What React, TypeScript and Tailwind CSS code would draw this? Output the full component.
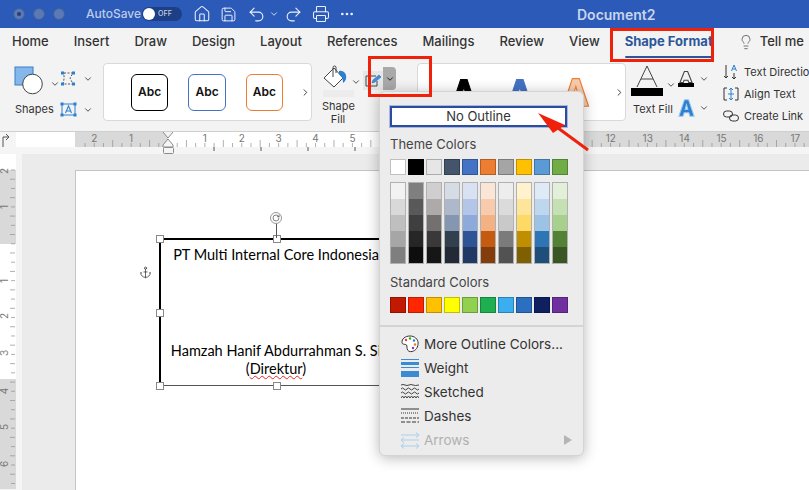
import { ChevronDown, ChevronRight, Home, Lightbulb, MoreHorizontal, Printer, Redo2, RotateCw, Save, Undo2, Anchor } from "lucide-react";

const ui = "font-['Inter','Liberation_Sans',sans-serif]";

const tabs = ["Home", "Insert", "Draw", "Design", "Layout", "References", "Mailings", "Review", "View"];

const themeColors = ["#ffffff", "#000000", "#e7e6e6", "#44546a", "#4472c4", "#ed7d31", "#a5a5a5", "#ffc000", "#5b9bd5", "#70ad47"];

const shades = [
  ["#f2f2f2", "#d9d9d9", "#bfbfbf", "#a6a6a6", "#7f7f7f"],
  ["#7f7f7f", "#595959", "#3f3f3f", "#262626", "#0d0d0d"],
  ["#d0cece", "#aeaaaa", "#757070", "#3a3838", "#171616"],
  ["#d6dce5", "#adb9ca", "#8496b0", "#323f4f", "#222a35"],
  ["#d9e2f3", "#b4c6e7", "#8eaadb", "#2f5496", "#1f3864"],
  ["#fbe5d5", "#f7cbac", "#f4b183", "#c55a11", "#833c0b"],
  ["#ededed", "#dbdbdb", "#c9c9c9", "#7b7b7b", "#525252"],
  ["#fff2cc", "#fee599", "#ffd966", "#bf8f00", "#7f6000"],
  ["#deeaf6", "#bdd7ee", "#9cc3e5", "#2e75b5", "#1e4e79"],
  ["#e2efd9", "#c5e0b3", "#a8d08d", "#538135", "#375623"],
];

const standardColors = ["#c21a00", "#ff2600", "#ffc000", "#ffff00", "#92d050", "#1eb050", "#3aaeef", "#2b6fc0", "#0f2060", "#7030a0"];

function Chev({ className = "" }: { className?: string }) {
  return <ChevronDown size={10} strokeWidth={2.2} className={"text-[#444] " + className} />;
}

function Swatch({ color }: { color: string }) {
  return <div className="h-4 w-4 border border-black/25" style={{ backgroundColor: color }} />;
}

function TitleBar() {
  return (
    <div className="flex h-7 shrink-0 items-center bg-[#2b5ab8] text-white">
      <div className="ml-[13px] flex gap-2">
        <div className="flex h-3 w-3 items-center justify-center rounded-full border border-[#3f5f9f] bg-[#5b79b4]">
          <div className="h-1 w-1 rounded-full bg-[#2a3f70]" />
        </div>
        <div className="h-3 w-3 rounded-full border border-[#3f5f9f] bg-[#5b79b4]" />
        <div className="h-3 w-3 rounded-full border border-[#3f5f9f] bg-[#5b79b4]" />
      </div>
      <span className="ml-[21px] w-[56px] text-[12px] font-medium text-white/70">AutoSave</span>
      <div className="flex h-[14px] w-10 items-center rounded-full bg-[#1d3f85] pl-px">
        <div className="h-3 w-3 rounded-full bg-white" />
        <span className="ml-[3px] text-[7px] font-medium tracking-wide text-white/75">OFF</span>
      </div>
      <Home size={18} strokeWidth={1.4} className="ml-[11px] text-white/90" />
      <Save size={17} strokeWidth={1.4} className="ml-[9px] text-white/90" />
      <Undo2 size={19} strokeWidth={1.4} className="ml-[10px] text-white/90" />
      <ChevronDown size={10} strokeWidth={2} className="ml-[3px] text-white/90" />
      <Redo2 size={19} strokeWidth={1.4} className="ml-[5px] text-white/90" />
      <Printer size={18} strokeWidth={1.4} className="ml-[9px] text-white/90" />
      <MoreHorizontal size={16} strokeWidth={2} className="ml-[9px] text-white/90" />
      <span className="ml-[222px] text-[14px] font-semibold text-white/75">Document2</span>
    </div>
  );
}

function TabRow() {
  return (
    <div className="flex h-8 shrink-0 items-center gap-[25px] bg-[#f3f3f3] pb-[4px] pl-3 text-[13px] font-medium text-[#333]">
      {tabs.map((t) => (
        <span key={t}>{t}</span>
      ))}
      <span className="relative font-bold text-[#2b579a]">
        Shape Format
        <span className="absolute -bottom-[6px] left-0 h-[2px] w-full rounded bg-[#2b579a]" />
      </span>
      <span className="flex items-center gap-[6px]">
        <Lightbulb size={16} strokeWidth={1.2} className="text-[#555]" />
        Tell me
      </span>
    </div>
  );
}

function AbcButton({ border }: { border: string }) {
  return (
    <div className={"flex h-[37px] w-[38px] items-center justify-center rounded-md border bg-white text-[12px] font-semibold text-[#111] " + border}>
      Abc
    </div>
  );
}

function BigA({ fill, stroke, size }: { fill: string; stroke: string; size: number }) {
  return (
    <svg width={size} height={size * 1.1} viewBox="0 0 24 26">
      <path d="M9 1h6l8 24h-6l-1.600-5H8.600L7 25H1zM10 15h4l-2-7z" fill={fill} stroke={stroke} strokeWidth="1" fillRule="evenodd" />
    </svg>
  );
}

function Ribbon() {
  return (
    <div className={"flex h-[72px] shrink-0 border-b border-[#cfcfcf] bg-[#f3f3f3] text-[11px] text-[#333]"}>
      {/* insert shapes */}
      <div className="ml-[14px] flex w-[50px] flex-col pt-[6px]">
        <div className="flex items-center">
          <svg width="30" height="30" viewBox="0 0 30 30">
            <rect x="1" y="1" width="18" height="18" fill="#84b8ec" stroke="#3a7cc6" />
            <circle cx="18.500" cy="18" r="9.800" fill="#fff" stroke="#444" strokeWidth="1" />
          </svg>
          <Chev className="ml-[6px] mt-[6px]" />
        </div>
        <span className="mt-[5px] ml-px">Shapes</span>
      </div>
      <div className="flex w-[42px] flex-col gap-[16px] pt-[11px]">
        <div className="flex items-center gap-[6px]">
          <svg width="17" height="15" viewBox="0 0 17 15" fill="none">
            <path d="M4 2h9l-3 5 3 6H3l1-5z" stroke="#555" strokeDasharray="2 1.500" />
            <rect x="1" y="0.500" width="3" height="3" fill="#2f7fd0" />
            <rect x="12" y="0.500" width="3" height="3" fill="#2f7fd0" />
            <rect x="1" y="11.500" width="3" height="3" fill="#2f7fd0" />
            <rect x="12" y="11.500" width="3" height="3" fill="#2f7fd0" />
          </svg>
          <Chev />
        </div>
        <div className="flex items-center gap-[6px]">
          <svg width="17" height="15" viewBox="0 0 17 15" fill="none">
            <rect x="2" y="2" width="13" height="11" stroke="#2f7fd0" />
            <path d="M5.500 11l3-7 3 7M6.700 9h3.600" stroke="#2f7fd0" strokeWidth="1.100" />
            <rect x="0.500" y="0.500" width="3" height="3" fill="#2f7fd0" />
            <rect x="13.500" y="0.500" width="3" height="3" fill="#2f7fd0" />
            <rect x="0.500" y="11.500" width="3" height="3" fill="#2f7fd0" />
            <rect x="13.500" y="11.500" width="3" height="3" fill="#2f7fd0" />
          </svg>
          <Chev />
        </div>
      </div>
      <div className="my-[2px] w-px bg-[#d5d5d5]" />
      {/* shape styles */}
      <div className="mt-[3px] ml-[10px] flex h-[58px] w-[209px] items-center gap-5 rounded-sm border border-[#d9d9d9] bg-white pl-[27px]">
        <AbcButton border="border-black" />
        <AbcButton border="border-[#4472c4]" />
        <AbcButton border="border-[#ed7d31]" />
        <ChevronRight size={11} strokeWidth={2} className="ml-[-3px] text-[#333]" />
      </div>
      <div className="ml-[10px] flex w-[42px] flex-col pt-[5px]">
        <div className="flex items-center">
          <svg width="27" height="26" viewBox="0 0 27 26" fill="none">
            <path d="M2 13L12 3l9 10-9 9z" fill="#fff" stroke="#444" />
            <path d="M11 12V2.500a1.500 1.500 0 0 1 3 0V8" stroke="#444" />
            <path d="M17 6c5-1 8 3 7 8-.5 2-2 3-3 4 0-4-1-7-4-9z" fill="#2f7fd0" />
          </svg>
          <Chev className="ml-[2px] mt-[8px]" />
        </div>
        <div className="mx-[1px] mt-[-1px] h-[7px] w-[31px] bg-[#ececec]" />
        <span className="text-center leading-[13px] mt-[3px] w-[32px]">Shape Fill</span>
      </div>
      {/* shape outline, menu is open */}
      <div className="ml-[2px] mt-[7px] flex h-[23px] items-start">
        <div className="mt-[4px] flex h-[19px] w-5 items-center justify-center bg-[#e6e6e6]">
          <svg width="17" height="13" viewBox="0 0 17 13" fill="none">
            <path d="M1 2h10M1 2v10h11V7" stroke="#444" />
            <path d="M7 9l1-3 6-5 2 2-6 5z" fill="#3f8fdc" stroke="#1f6fbc" strokeWidth="0.600" />
          </svg>
        </div>
        <div className="flex h-[23px] w-[13px] items-center justify-center rounded-r-sm bg-[#a9a9a9]">
          <ChevronDown size={10} strokeWidth={2.4} className="text-[#222]" />
        </div>
      </div>
      {/* word art */}
      <div className="mt-[3px] ml-[21px] flex h-[58px] w-[209px] items-center gap-[30px] rounded-sm border border-[#d9d9d9] bg-white pl-[33px]">
        <BigA fill="#000" stroke="#000" size={26} />
        <BigA fill="#4472c4" stroke="#4472c4" size={26} />
        <BigA fill="#f8cbad" stroke="#ed7d31" size={28} />
        <ChevronRight size={11} strokeWidth={2} className="ml-[-6px] text-[#333]" />
      </div>
      <div className="ml-[5px] flex w-[50px] flex-col pt-[5px]">
        <div className="flex items-start">
          <div className="flex w-[32px] flex-col items-center">
            <svg width="24" height="23" viewBox="0 0 24 23" fill="none">
              <path d="M2 22L12 1l10 21M6 14h12" stroke="#444" strokeWidth="1" />
            </svg>
            <div className="h-2 w-[32px] bg-black" />
          </div>
          <Chev className="ml-[3px] mt-[15px]" />
        </div>
        <span className="mt-[5px] ml-[2px] whitespace-nowrap">Text Fill</span>
      </div>
      <div className="ml-[2px] flex w-[40px] flex-col pt-[11px]">
        <div className="flex items-center">
          <div className="flex w-4 flex-col items-center">
            <svg width="14" height="12" viewBox="0 0 24 22" fill="none">
              <path d="M9 1h6l8 20h-6l-1.500-4h-7L7 21H1z" stroke="#444" strokeWidth="2" />
            </svg>
            <div className="h-1 w-4 bg-black" />
          </div>
          <Chev className="ml-[5px]" />
        </div>
        <div className="mt-[12px] flex items-center">
          <svg width="17" height="18" viewBox="0 0 24 26">
            <path d="M9 1h6l8 24h-6l-1.600-5H8.600L7 25H1zM10 15h4l-2-7z" fill="#2f7fd0" stroke="#9cc9f0" strokeWidth="1.500" fillRule="evenodd" />
          </svg>
          <Chev className="ml-[4px]" />
        </div>
      </div>
      <div className="my-[2px] w-px bg-[#d5d5d5]" />
      {/* text tools, cut off by the window */}
      <div className="ml-[14px] flex flex-col gap-[6px] pt-[4px] text-[11px] whitespace-nowrap">
        <div className="flex h-4 items-center gap-[5px]">
          <svg width="16" height="16" viewBox="0 0 16 16" fill="none">
            <path d="M3 1v13M1 12l2 2 2-2M11 9v6M9 13l2 2 2-2" stroke="#333" />
            <path d="M8.500 7l2.500-6 2.500 6M9.500 5h3" stroke="#2f7fd0" />
          </svg>
          Text Direction
        </div>
        <div className="flex h-4 items-center gap-[5px]">
          <svg width="16" height="14" viewBox="0 0 16 14" fill="none">
            <path d="M4 1H1v12h3M12 1h3v12h-3" stroke="#333" />
            <path d="M8 1v12M6 3l2-2 2 2M6 11l2 2 2-2M5 7h6" stroke="#2f7fd0" />
          </svg>
          Align Text
        </div>
        <div className="flex h-4 items-center gap-[5px]">
          <svg width="16" height="12" viewBox="0 0 16 12" fill="none">
            <rect x="0.500" y="1" width="9" height="6" rx="3" stroke="#333" />
            <rect x="6.500" y="5" width="9" height="6" rx="3" stroke="#333" />
          </svg>
          Create Link
        </div>
      </div>
    </div>
  );
}

function HRuler() {
  const inches = [-2, -1, 1, 2, 3, 4, 5, 6, 7, 8, 9, 10, 11, 12, 13, 14, 15, 16, 17];
  const ticks = Array.from({ length: 100 }, (_, i) => 168 + (i - 24) * 9.22);
  return (
    <div className="relative h-[22px] shrink-0 bg-[#f5f5f5]">
      <svg width="809" height="22" className="block">
        <rect x="16" y="0" width="793" height="15" fill="#fff" />
        <rect x="75" y="0" width="93" height="15" fill="#d9d9d9" />
        <rect x="500" y="0" width="309" height="15" fill="#d9d9d9" />
        {ticks.filter((x) => x > 76).map((x, i) => (
          <line key={i} x1={x} x2={x} y1={(i + 1) % 4 === 0 ? 8 : 11} y2={15} stroke="#8f8f8f" strokeWidth="0.700" />
        ))}
        {inches.map((n) => (
          <text key={n} x={168 + n * 36.9} y={10} fontSize="10" textAnchor="middle" fill="#777" fontFamily="Inter">
            {Math.abs(n)}
          </text>
        ))}
        {[214, 261, 308, 355].map((x) => (
          <line key={x} x1={x} x2={x} y1={15} y2={19} stroke="#555" />
        ))}
        <path d="M163 0l5 6 5-6M168 7l5 6v2h-10v-2z" fill="#f5f5f5" stroke="#8a8a8a" />
        <rect x="163.500" y="15.500" width="10" height="6" rx="1" fill="#f5f5f5" stroke="#8a8a8a" />
        <path d="M3 15V5h5M6 2l3 3-3 3" stroke="#555" fill="none" />
      </svg>
    </div>
  );
}

function VRuler() {
  const marks = [
    { label: "2", y: 172 },
    { label: "1", y: 208 },
    { label: "1", y: 282 },
    { label: "2", y: 317 },
    { label: "3", y: 354 },
    { label: "4", y: 392 },
    { label: "5", y: 428 },
    { label: "6", y: 465 },
  ];
  const ticks = Array.from({ length: 38 }, (_, i) => 171 + i * 9.22);
  return (
    <svg width="16" height="335" viewBox="0 155 16 335" className="block shrink-0">
      <rect x="0" y="155" width="16" height="335" fill="#fff" />
      <rect x="0" y="171" width="16" height="74" fill="#d9d9d9" />
      <rect x="0" y="380" width="16" height="110" fill="#d9d9d9" />
      {ticks.map((y, i) => (
        <line key={i} x1={i % 2 ? 10 : 11} x2={15} y1={y} y2={y} stroke="#8f8f8f" strokeWidth="0.700" />
      ))}
      {marks.map((m) => (
        <text key={m.y} x={5} y={m.y} fontSize="10" textAnchor="middle" fill="#777" fontFamily="Inter" transform={`rotate(-90 5 ${m.y})`} dominantBaseline="middle">
          {m.label}
        </text>
      ))}
    </svg>
  );
}

function Handle({ className }: { className: string }) {
  return <div className={"absolute h-2 w-2 border border-[#888] bg-white " + className} />;
}

function TextBox() {
  return (
    <div className="relative ml-[83px] mt-[67px] h-[148px] w-[233px] border-t-2 border-b border-l-2 border-r border-t-black border-b-[#555] border-l-black border-r-black font-['Lato','Carlito',sans-serif] text-[14.500px] leading-[18px] text-black">
      <div className="flex h-full flex-col items-center pt-[6px] whitespace-nowrap">
        <span>PT Multi Internal Core Indonesia</span>
        <span className="mt-[78px]">Hamzah Hanif Abdurrahman S. Si</span>
        <span>
          (<span className="underline decoration-[#e22] decoration-wavy decoration-1">Direktur</span>)
        </span>
      </div>
      <Handle className="-left-[5px] -top-[5px]" />
      <Handle className="left-[112px] -top-[5px]" />
      <Handle className="-left-[5px] top-[69px]" />
      <Handle className="-left-[5px] -bottom-[5px]" />
      <Handle className="left-[112px] -bottom-[5px]" />
      <div className="absolute left-[115px] -top-[16px] h-[14px] w-px bg-[#555]" />
      <div className="absolute left-[109px] -top-[28px] flex h-3 w-3 items-center justify-center rounded-full border border-[#999] bg-white">
        <RotateCw size={8} strokeWidth={2} className="text-[#444]" />
      </div>
      <Anchor size={13} strokeWidth={1.5} className="absolute -left-[22px] top-[26px] text-[#444]" />
    </div>
  );
}

function MenuRow({ icon, label, arrow, disabled }: { icon: React.ReactNode; label: string; arrow?: boolean; disabled?: boolean }) {
  return (
    <div className={"flex h-6 items-center pl-[21px] pr-[11px] text-[13.500px] " + (disabled ? "text-[#b0b0b0]" : "text-[#333]")}>
      <div className="flex w-[23px] shrink-0">{icon}</div>
      <span className="flex-1 whitespace-nowrap">{label}</span>
      {arrow && <span className={"h-0 w-0 border-y-[5px] border-l-[8px] border-y-transparent " + (disabled ? "border-l-[#b5b5b5]" : "border-l-[#555]")} />}
    </div>
  );
}

function OutlineMenu() {
  return (
    <div className={"absolute left-[379px] top-[91px] h-[365px] w-[205px] rounded-md border border-[#d4d4d4] bg-[#ececec] shadow-[0_2px_14px_rgba(0,0,0,0.28)] " + ui}>
      <div className="mx-[10px] mt-[14px] flex h-[21px] w-[177px] items-center justify-center border-2 border-[#2b4da0] bg-white text-[13px] text-[#333] ring-1 ring-[#a9b8dc]">
        No Outline
      </div>
      <div className="ml-[10px] mt-[9px] text-[13px] leading-4 text-[#444]">Theme Colors</div>
      <div className="ml-[10px] mt-[7px] flex gap-[2px]">
        {themeColors.map((c) => (
          <Swatch key={c} color={c} />
        ))}
      </div>
      <div className="ml-[10px] mt-[7px] flex gap-[2px]">
        {shades.map((col, i) => (
          <div key={i} className="w-4 border border-black/25">
            {col.map((c) => (
              <div key={c} className="h-4" style={{ backgroundColor: c }} />
            ))}
          </div>
        ))}
      </div>
      <div className="ml-[10px] mt-[10px] text-[13px] leading-4 text-[#444]">Standard Colors</div>
      <div className="ml-[10px] mt-[7px] flex gap-[2px]">
        {standardColors.map((c) => (
          <Swatch key={c} color={c} />
        ))}
      </div>
      <div className="mt-3 h-[2px] bg-[#d4d4d4]" />
      <div className="mt-[5px]">
        <MenuRow
          label="More Outline Colors..."
          icon={
            <svg width="18" height="18" viewBox="0 0 18 18" fill="none">
              <path d="M9 1C4 1 .7 4 1 7.500c.2 2 2.500 1.800 3.800 2 1.400.3 1 2.200 1.300 4 .3 2.500 2.500 3.500 5 3 4-1 6-4.500 6-8.500C17 4 13.500 1 9 1z" fill="#fff" stroke="#333" />
              <circle cx="5" cy="5" r="1.200" fill="#e33" />
              <circle cx="9" cy="3.500" r="1.200" fill="#2a2" />
              <circle cx="13" cy="5.500" r="1.200" fill="#28c" />
              <circle cx="14" cy="9.500" r="1.200" fill="#e72" />
              <circle cx="12" cy="13" r="1.200" fill="#83b" />
            </svg>
          }
        />
        <MenuRow
          label="Weight"
          icon={
            <svg width="18" height="18" viewBox="0 0 18 18">
              <rect y="0" width="18" height="1" fill="#3a8ad4" />
              <rect y="3" width="18" height="3" fill="#3a8ad4" />
              <rect y="8" width="18" height="1" fill="#3a8ad4" />
              <rect y="12" width="18" height="6" fill="#3a8ad4" />
            </svg>
          }
        />
        <MenuRow
          label="Sketched"
          icon={
            <svg width="18" height="18" viewBox="0 0 18 18" fill="none" stroke="#333" strokeWidth="0.900">
              <path d="M0 2q2-1 4 0t4 0 4 0 6 0" />
              <path d="M0 6q1.500-2 3 0t3 0 3 0 3 0 3 0 3 0" />
              <path d="M0 10q1.500-2 3 0t3 0 3 0 3 0 3 0 3 0" />
              <path d="M0 15l1.500-2 1.500 2 1.500-2 1.500 2 1.500-2 1.500 2 1.500-2 1.500 2 1.500-2 1.500 2 1.500-2 1.500 2" />
            </svg>
          }
        />
        <MenuRow
          label="Dashes"
          icon={
            <svg width="18" height="18" viewBox="0 0 18 18" fill="none" stroke="#333">
              <path d="M0 2h18" />
              <path d="M0 6h18" strokeDasharray="1 1" />
              <path d="M0 11h18" strokeDasharray="3 1" />
              <path d="M0 15h18" strokeDasharray="4 1.500" />
            </svg>
          }
        />
        <MenuRow
          label="Arrows"
          arrow
          disabled
          icon={
            <svg width="18" height="18" viewBox="0 0 18 18" fill="none" stroke="#a9d0ee">
              <path d="M0 4h18M15 1.500L18 4l-3 2.500" />
              <path d="M0 9h18M3 6.500L0 9l3 2.500" />
              <path d="M0 15h18M3 12.500L0 15l3 2.500M15 12.500l3 2.500-3 2.500" />
            </svg>
          }
        />
      </div>
    </div>
  );
}

export default function App() {
  return (
    <div className={"relative flex h-[490px] w-[809px] flex-col overflow-hidden bg-[#f3f3f3] " + ui}>
      <TitleBar />
      <TabRow />
      <Ribbon />
      <HRuler />
      <div className="flex min-h-0 flex-1">
        <VRuler />
        <div className="w-[6px] shrink-0 bg-[#f5f5f5]" />
        <div className="flex min-w-0 flex-1 flex-col bg-[#ebebeb] pl-[53px] pt-4">
          <div className="flex-1 border-l border-t border-[#c4c4c4] bg-white">
            <TextBox />
          </div>
        </div>
      </div>
      <OutlineMenu />
      {/* red callouts drawn over the screenshot */}
      <div className="absolute left-[610px] top-[28px] h-[34px] w-[104px] border-[3px] border-[#f0210b]" />
      <div className="absolute left-[368px] top-[56px] h-[41px] w-[64px] border-[3px] border-[#f0210b]" />
      <svg width="809" height="490" className="pointer-events-none absolute left-0 top-0">
        <path d="M588 150L558 128" stroke="#f0210b" strokeWidth="3" />
        <path d="M538 113L565 125L553 133z" fill="#f0210b" />
      </svg>
    </div>
  );
}
